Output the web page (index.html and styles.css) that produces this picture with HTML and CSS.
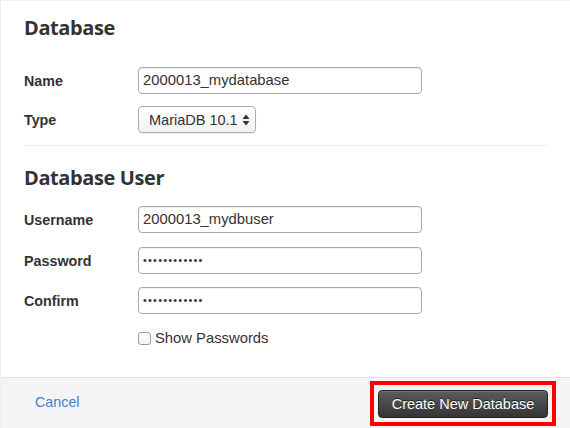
FILE: index.html
```html
<!DOCTYPE html>
<html>
<head>
<meta charset="utf-8">
<link rel="stylesheet" href="styles.css">
</head>
<body>
<div class="modal">
  <div class="modal-body">
    <h2 class="title title-first">Database</h2>
    <div class="row row-first">
      <label class="label">Name</label>
      <div class="input">2000013_mydatabase</div>
    </div>
    <div class="row row-type">
      <label class="label">Type</label>
      <div class="select">
        <span class="select-text">MariaDB 10.1</span>
        <svg class="arrows" width="8" height="12" viewBox="0 0 8 12"><path d="M4 0.5 L7.5 5 L0.5 5 Z M4 11.5 L7.5 7 L0.5 7 Z" fill="#333"/></svg>
      </div>
    </div>
    <div class="sep"></div>
    <h2 class="title title-second">Database User</h2>
    <div class="row row-user">
      <label class="label">Username</label>
      <div class="input">2000013_mydbuser</div>
    </div>
    <div class="row row-pass">
      <label class="label">Password</label>
      <div class="input dots">••••••••••••</div>
    </div>
    <div class="row row-confirm">
      <label class="label">Confirm</label>
      <div class="input dots">••••••••••••</div>
    </div>
    <div class="row row-check">
      <span class="label"></span>
      <span class="checkbox"></span>
      <span class="check-text">Show Passwords</span>
    </div>
  </div>
  <div class="footer">
    <a class="cancel">Cancel</a>
    <div class="highlight">
      <button class="btn">Create New Database</button>
    </div>
  </div>
</div>
</body>
</html>
```
FILE: styles.css
```css
html, body {
  margin: 0;
  padding: 0;
  background: #fff;
}
body {
  font-family: "Liberation Sans", Arial, sans-serif;
  color: #333;
  width: 570px;
  height: 428px;
  overflow: hidden;
}
.modal {
  height: 428px;
  display: flex;
  flex-direction: column;
  box-sizing: border-box;
  border-top: 1px solid #f2f2f2;
  border-left: 1px solid #efefef;
}
.modal-body {
  flex: 1;
  padding: 0 22px 0 23px;
  display: flex;
  flex-direction: column;
}
.title {
  font-family: "Open Sans", sans-serif;
  font-weight: 700;
  font-size: 20px;
  line-height: 28px;
  margin: 0;
  color: #333;
  letter-spacing: -0.4px;
}
.title-first { margin-top: 13px; }
.title-second { margin-top: 18px; }
.row {
  display: flex;
  align-items: center;
}
.row-first { margin-top: 25px; }
.row-type { margin-top: 12px; }
.row-user { margin-top: 14px; }
.row-pass { margin-top: 14px; }
.row-confirm { margin-top: 13px; }
.row-check { margin-top: 16px; }
.label {
  width: 114px;
  flex: none;
  font-size: 14.3px;
  font-weight: bold;
  color: #333;
}
.input {
  box-sizing: border-box;
  width: 284px;
  height: 27px;
  border: 1px solid #a9a9a9;
  border-radius: 4px;
  padding: 0 4px;
  font-size: 14.8px;
  line-height: 25px;
  color: #333;
  box-shadow: inset 0 1px 1px rgba(0,0,0,0.06);
  background: #fff;
}
.dots {
  font-size: 11px;
  letter-spacing: 1.2px;
  color: #333;
}
.select {
  box-sizing: border-box;
  width: 118px;
  height: 27px;
  border: 1px solid #adadad;
  border-radius: 4px;
  background: linear-gradient(#ffffff, #f1f1f1);
  display: flex;
  align-items: center;
  padding: 0 5px 0 10px;
  box-shadow: 0 1px 1px rgba(0,0,0,0.08);
}
.select-text {
  font-size: 14.5px;
  flex: 1;
  color: #333;
}
.arrows { flex: none; }
.sep {
  height: 1px;
  background: #ececec;
  margin-top: 12px;
}
.checkbox {
  box-sizing: border-box;
  width: 13px;
  height: 13px;
  border: 1px solid #9a9a9a;
  border-radius: 3px;
  background: linear-gradient(#fff, #f4f4f4);
  margin-right: 4px;
  flex: none;
}
.check-text {
  font-size: 14.8px;
  color: #333;
}
.footer {
  height: 51px;
  box-sizing: border-box;
  border-top: 1px solid #e2e2e2;
  background: #f4f4f4;
  display: flex;
  align-items: center;
  justify-content: space-between;
  padding: 0 14px 0 34px;
}
.cancel {
  font-size: 14.3px;
  color: #4a7fc9;
  margin-top: -2px;
}
.highlight {
  border: 4px solid #f00;
  padding: 5px 4px 4px 4px;
  display: flex;
  margin-top: 1px;
}
.btn {
  box-sizing: border-box;
  width: 170px;
  height: 28px;
  border: 1px solid #222;
  border-radius: 4px;
  background: linear-gradient(#5c5c5c, #353535);
  color: #fff;
  font-family: "Liberation Sans", Arial, sans-serif;
  font-size: 14.5px;
  padding: 0;
  text-shadow: 0 -1px 0 rgba(0,0,0,0.6);
  box-shadow: inset 0 1px 0 rgba(255,255,255,0.15);
}
```
